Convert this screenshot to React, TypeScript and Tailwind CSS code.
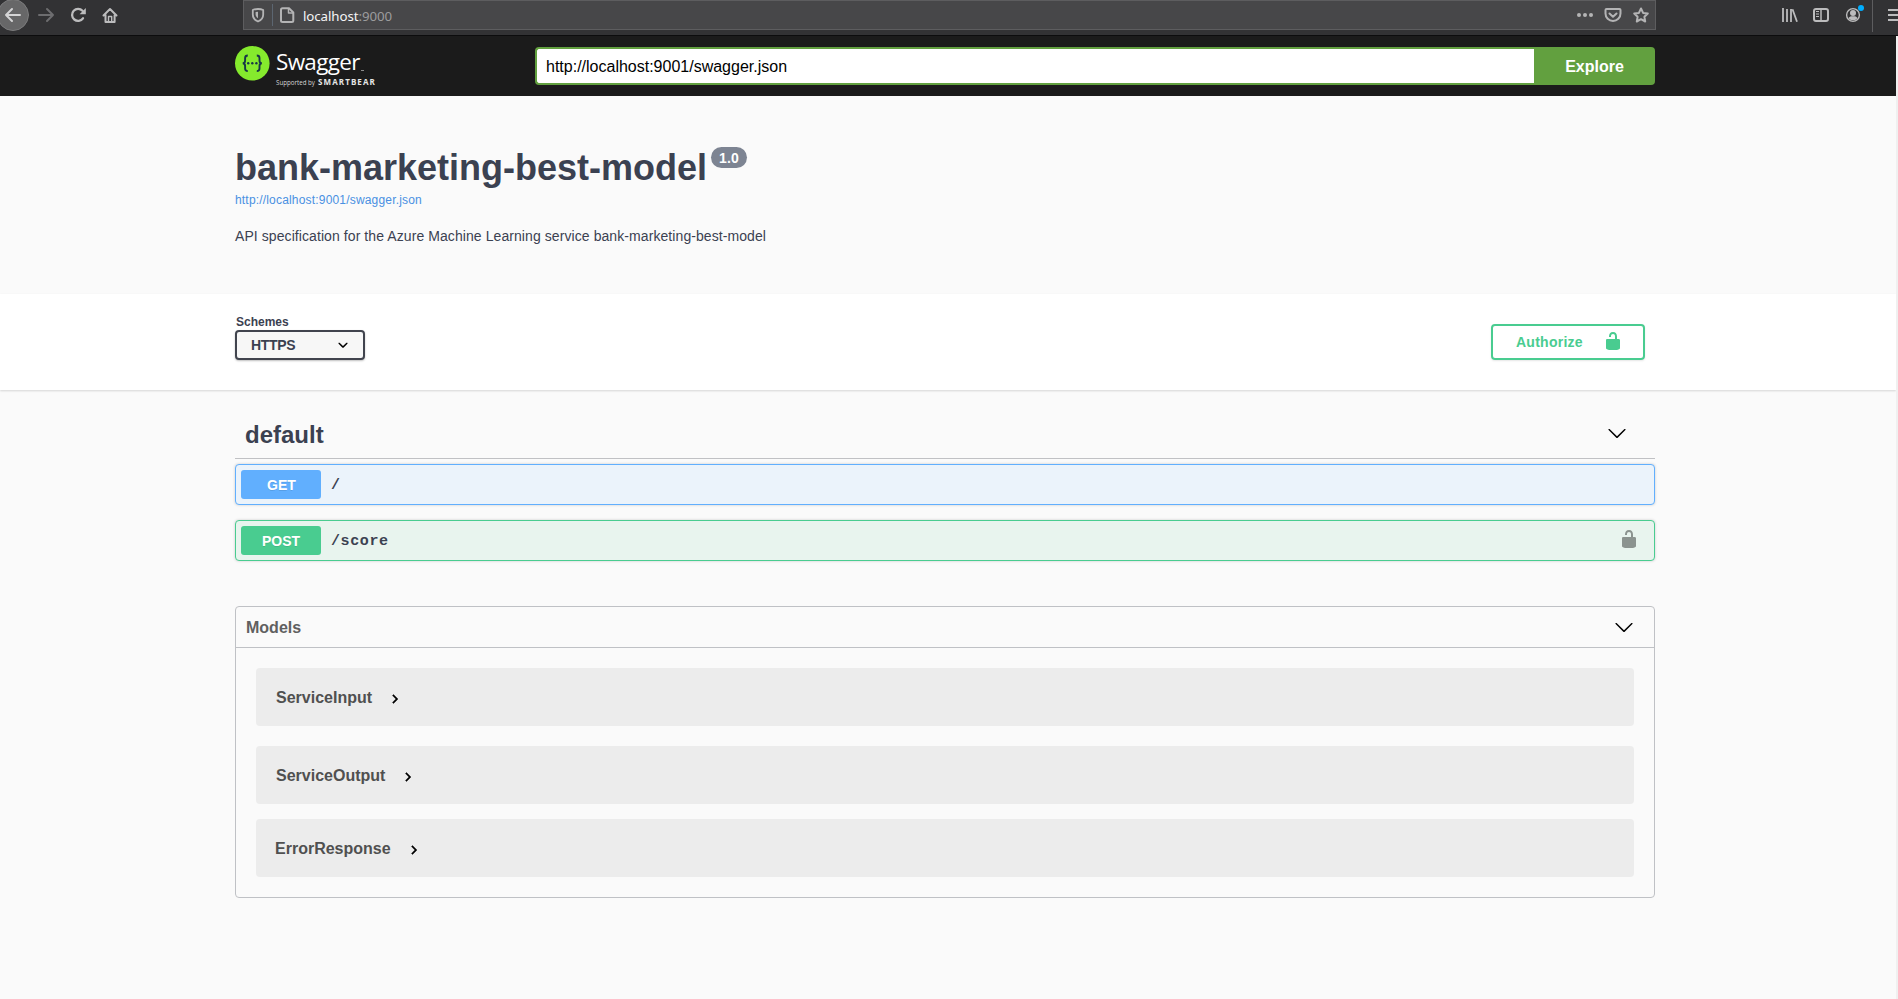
import React from "react";

const ARIAL = "font-['Liberation_Sans',Arial,sans-serif]";

function UnlockIcon({ className }: { className: string }) {
  return (
    <svg viewBox="0 0 20 20" width="20" height="20" fill="currentColor" className={className}>
      <path d="M15.8 8H14V5.6C14 2.703 12.665 1 10 1 7.334 1 6 2.703 6 5.6V6h2v-.801C8 3.754 8.797 3 10 3c1.203 0 2 .754 2 2.199V8H4c-.553 0-1 .646-1 1.199V17c0 .549.428 1.139.951 1.307l1.197.387C5.672 18.861 6.55 19 7.1 19h5.8c.549 0 1.428-.139 1.951-.307l1.196-.387c.524-.167.953-.757.953-1.306V9.199C17 8.646 16.352 8 15.8 8z" />
    </svg>
  );
}

function ChevronDown() {
  return (
    <svg viewBox="0 0 20 20" width="20" height="20" fill="#000">
      <path d="M17.418 6.109c.272-.268.709-.268.979 0s.271.701 0 .969l-7.908 7.83c-.27.268-.707.268-.979 0l-7.908-7.83c-.27-.268-.27-.701 0-.969.271-.268.709-.268.979 0L10 13.25l7.418-7.141z" />
    </svg>
  );
}

function ChevronRight() {
  return (
    <svg viewBox="0 0 24 24" width="18" height="18" fill="#000" stroke="#000" strokeWidth="0.500">
      <path d="M10 6L8.59 7.41 13.17 12l-4.58 4.59L10 18l6-6z" />
    </svg>
  );
}

function BrowserBar() {
  return (
    <div className="flex h-[36px] shrink-0 items-start overflow-hidden border-b border-[#0c0c0d] bg-[#323234]">
      <div className="flex w-[243px] shrink-0 text-[#bcbcbd]">
        <svg width="124" height="35" viewBox="0 0 124 35" fill="none" stroke="currentColor" strokeWidth="2" strokeLinecap="round" strokeLinejoin="round">
          <circle cx="13" cy="15" r="15.5" fill="#676768" stroke="#7b7b7c" strokeWidth="1" />
          <path d="M20 15H6M12 9l-6 6 6 6" stroke="#d5d5d6" />
          <path d="M39 15h14M47 9l6 6-6 6" stroke="#6d6d6f" />
          <path d="M83 18.300A6 6 0 1 1 82.500 10.800" strokeWidth="2.300" />
          <path d="M85.800 8v6.200h-6.200z" fill="currentColor" stroke="none" />
          <path d="M103.500 15.500L110 9l6.500 6.500M105.500 15V22h9.100V15" />
          <path d="M108.500 16.500h3.200V22h-3.200z" strokeWidth="1.400" />
        </svg>
      </div>
      <div className="flex h-[30px] w-[1413px] shrink-0 items-start border border-[#5d5d5f] bg-[#474749] text-[#b4b4b5]">
        <svg width="56" height="28" viewBox="244 1 56 28" fill="none" stroke="currentColor" strokeWidth="1.800" strokeLinejoin="round">
          <path d="M258 9c2 0 3.800.3 5.200 1v4.500c0 3-2 5.700-5.200 7-3.200-1.300-5.200-4-5.200-7V10c1.400-.7 3.200-1 5.200-1z" />
          <path d="M258 11.800v6.400c-1.500-1-2.400-2.300-2.400-3.800v-2.300z" fill="currentColor" stroke="none" />
          <path d="M272.500 4v22" stroke="#5c6671" strokeWidth="1" />
          <path d="M282.500 8.200h6.500l4.300 4.300v8c0 .8-.6 1.500-1.500 1.500h-9.300c-.9 0-1.500-.7-1.500-1.500V9.700c0-.9.600-1.500 1.500-1.500z" strokeWidth="2" />
          <path d="M288.500 8.500v4.500h4.500" strokeWidth="1.500" />
        </svg>
        <div className="ml-[3px] mt-[5px] flex-1 font-['Noto_Sans','Open_Sans',sans-serif] text-[13.300px] leading-[20px] tracking-[-0.080px] text-[#9c9c9d]">
          <span className="text-[#f5f5f6]">localhost</span>:9000
        </div>
        <svg width="80" height="28" viewBox="1575 1 80 28" fill="none" stroke="currentColor" strokeWidth="2" strokeLinejoin="round" strokeLinecap="round">
          <g fill="currentColor" stroke="none">
            <circle cx="1579" cy="15" r="2" />
            <circle cx="1585" cy="15" r="2" />
            <circle cx="1591" cy="15" r="2" />
          </g>
          <path d="M1606.500 9h13c.6 0 1 .4 1 1v3.500a7.500 7.500 0 0 1-15 0V10c0-.6.400-1 1-1z" />
          <path d="M1609.500 13.500l3.500 3.300 3.500-3.300" />
          <path d="M1641 8.500l2.100 4.400 4.700.6-3.400 3.300.8 4.700-4.200-2.300-4.200 2.300.8-4.700-3.400-3.300 4.700-.6z" />
        </svg>
      </div>
      <svg width="242" height="35" viewBox="1656 0 242 35" fill="none" stroke="#bcbcbd" strokeWidth="2" strokeLinecap="butt">
        <path d="M1783 8v14M1787 9v13M1791 9v13M1792.500 9.200l4.500 12.500" strokeWidth="1.800" />
        <rect x="1814" y="9" width="14" height="12" rx="2" />
        <path d="M1821 9v12" strokeWidth="1.500" />
        <path d="M1816 11.500h3M1816 14h3M1816 16.500h3" strokeWidth="1" />
        <circle cx="1853" cy="15" r="6.400" strokeWidth="1.400" />
        <circle cx="1853" cy="13" r="3" fill="#bcbcbd" stroke="none" />
        <path d="M1848.500 18c1-1.500 2-1.800 4.500-1.800s3.500.3 4.500 1.800c-1 1.500-2.500 2.300-4.500 2.300s-3.500-.8-4.500-2.300z" fill="#bcbcbd" stroke="none" />
        <circle cx="1861" cy="8" r="3" fill="#00aeff" stroke="none" />
        <path d="M1872.500 0v32" stroke="#5d5d5f" strokeWidth="1" />
        <path d="M1888 10h10M1888 15h10M1888 20h10" />
      </svg>
    </div>
  );
}

function Logo() {
  return (
    <div className="flex w-[300px] shrink-0">
      <svg width="35" height="35" viewBox="0 0 35 35" className="mt-[10px]">
        <circle cx="17.300" cy="17.300" r="17.300" fill="#85ea2d" />
        <g fill="none" stroke="#173647" strokeWidth="1.900">
          <path d="M12.800 9.500c-2.200 0-2.700.7-2.700 2.500v2.500c0 1.800-.6 2.800-2.400 2.800 1.800 0 2.400 1 2.400 2.800v2.500c0 1.800.5 2.500 2.700 2.500" />
          <path d="M21.800 9.500c2.200 0 2.700.7 2.700 2.500v2.500c0 1.800.6 2.800 2.400 2.800-1.800 0-2.400 1-2.400 2.800v2.500c0 1.800-.5 2.500-2.700 2.500" />
        </g>
        <g fill="#173647">
          <circle cx="13.200" cy="17.300" r="1.200" />
          <circle cx="17.300" cy="17.300" r="1.200" />
          <circle cx="21.400" cy="17.300" r="1.200" />
        </g>
      </svg>
      <div className="ml-[6px] mt-[11px] font-['Open_Sans',sans-serif] text-white">
        <div className="flex h-[30px] items-end">
          <span className="text-[22.500px] leading-[30px] tracking-[-0.700px]">Swagger</span>
          <span className="mb-[6px] ml-[1px] h-px w-[3px] bg-[#8c8c8c]" />
        </div>
        <div className="flex items-baseline leading-[10px]">
          <span className="w-[42px] whitespace-nowrap text-[6.200px] text-[#d6d6d6]">Supported by</span>
          <span className="whitespace-nowrap text-[8px] font-bold tracking-[1.100px] text-[#e6e6e6]">SMARTBEAR</span>
        </div>
      </div>
    </div>
  );
}

function Topbar() {
  return (
    <header className="flex h-[60px] bg-[#1b1b1b] pl-[235px]">
      <Logo />
      <div className="mt-[11px] flex h-[38px] w-[1120px]">
        <div className="flex flex-1 items-center rounded-l-[4px] border-2 border-r-0 border-[#62a03f] bg-white pl-[9px] pt-[2px] text-[16px] text-black">
          http://localhost:9001/swagger.json
        </div>
        <button className="w-[121px] rounded-r-[4px] bg-[#62a03f] pt-[2px] text-[16px] font-bold text-white">Explore</button>
      </div>
    </header>
  );
}

function Operation({ method, path, locked }: { method: "GET" | "POST"; path: string; locked?: boolean }) {
  const get = method === "GET";
  return (
    <div
      className={`flex h-[41px] items-center rounded-[4px] border pl-[5px] pr-[15px] shadow-[0_0_3px_rgba(0,0,0,0.19)] ${
        get ? "border-[#61affe] bg-[#ebf3fb]" : "border-[#49cc90] bg-[#e8f4ee]"
      }`}
    >
      <span
        className={`flex h-[29px] w-[80px] items-center justify-center rounded-[3px] pt-px text-[14px] font-bold text-white [text-shadow:0_1px_0_rgba(0,0,0,0.1)] ${
          get ? "bg-[#61affe] pl-px" : "bg-[#49cc90]"
        }`}
      >
        {method}
      </span>
      <span className="ml-[10px] flex-1 pt-[4px] font-['Liberation_Mono','Courier_New',monospace] text-[15px] font-bold tracking-[0.600px] text-[#3b4151]">
        {path}
      </span>
      {locked && <UnlockIcon className="-mt-[3px] text-[#8b938f]" />}
    </div>
  );
}

function ModelCard({ name, className }: { name: string; className: string }) {
  return (
    <div className={`flex h-[58px] items-center rounded-[4px] bg-[#ececec] ${className}`}>
      <span className="pt-[2px] text-[16px] font-bold text-[#505050]">{name}</span>
      <span className="ml-[14px] mt-[3px]">
        <ChevronRight />
      </span>
    </div>
  );
}

export default function App() {
  return (
    <div className={`flex h-[999px] w-[1898px] flex-col overflow-hidden bg-[#fafafa] ${ARIAL}`}>
      <BrowserBar />
      <div className="flex flex-1">
        <div className="flex w-[1896px] flex-col">
          <Topbar />
          <section className="h-[198px] pl-[235px] pt-[51px] text-[#3b4151]">
            <div className="flex items-start">
              <h1 className="text-[36px] font-bold leading-[42px]">bank-marketing-best-model</h1>
              <span className="ml-[4px] flex h-[21px] w-[36px] items-center justify-center rounded-full bg-[#7d8492] pt-px text-[14px] font-bold tracking-[0.200px] text-white">
                1.0
              </span>
            </div>
            <div className="mt-[3px] text-[12px] leading-[16px] tracking-[0.180px] text-[#4990e2]">http://localhost:9001/swagger.json</div>
            <p className="mt-[20px] text-[14px] leading-[16px] tracking-[0.080px]">
              API specification for the Azure Machine Learning service bank-marketing-best-model
            </p>
          </section>
          <section className="flex h-[96px] justify-between bg-white pl-[235px] pr-[251px] text-[#3b4151] shadow-[0_1px_2px_rgba(0,0,0,0.15)]">
            <div className="pt-[20px]">
              <div className="pl-px text-[12px] font-bold leading-[16px]">Schemes</div>
              <div className="flex h-[30px] w-[130px] items-center justify-between rounded-[4px] border-2 border-[#41444e] bg-[#f7f7f7] pl-[14px] pr-[10px] text-[14px] font-bold tracking-[-0.350px] shadow-[0_1px_2px_rgba(0,0,0,0.25)]">
                HTTPS
                <svg width="20" height="20" viewBox="0 0 20 20" fill="#000">
                  <path d="M13.418 7.859c.271-.268.709-.268.978 0 .27.268.272.701 0 .969l-3.908 3.830c-.27.268-.707.268-.979 0l-3.908-3.830c-.27-.267-.27-.701 0-.969.271-.268.709-.268.978 0L10 11l3.418-3.141z" />
                </svg>
              </div>
            </div>
            <button className="mt-[30px] flex h-[36px] w-[154px] items-center rounded-[4px] border-2 border-[#49cc90] pl-[23px] text-[14px] font-bold text-[#49cc90] shadow-[0_1px_2px_rgba(0,0,0,0.1)]">
              <span className="w-[87px] text-left tracking-[0.250px]">Authorize</span>
              <UnlockIcon className="-mt-[2px]" />
            </button>
          </section>
          <main className="w-[1655px] pl-[235px]">
            <div className="flex h-[69px] items-center justify-between border-b border-[#c0c1c4] pl-[10px] pr-[28px] pt-[17px]">
              <h2 className="pt-[5px] text-[24px] font-bold text-[#3b4151]">default</h2>
              <ChevronDown />
            </div>
            <div className="mt-[5px] flex flex-col gap-[15px]">
              <Operation method="GET" path="/" />
              <Operation method="POST" path="/score" locked />
            </div>
            <section className="mt-[45px] h-[292px] rounded-[4px] border border-[#bfc1c5]">
              <div className="flex h-[41px] items-center justify-between border-b border-[#bfc1c5] pl-[10px] pr-[20px]">
                <h3 className="pt-[2px] text-[16px] font-bold text-[#606060]">Models</h3>
                <ChevronDown />
              </div>
              <div className="px-[20px] pt-[20px]">
                <ModelCard name="ServiceInput" className="pl-[20px]" />
                <ModelCard name="ServiceOutput" className="mt-[20px] pl-[20px]" />
                <ModelCard name="ErrorResponse" className="mt-[15px] pl-[19px]" />
              </div>
            </section>
          </main>
        </div>
        <div className="w-[2px] bg-[#f0f0f0]" />
      </div>
    </div>
  );
}
